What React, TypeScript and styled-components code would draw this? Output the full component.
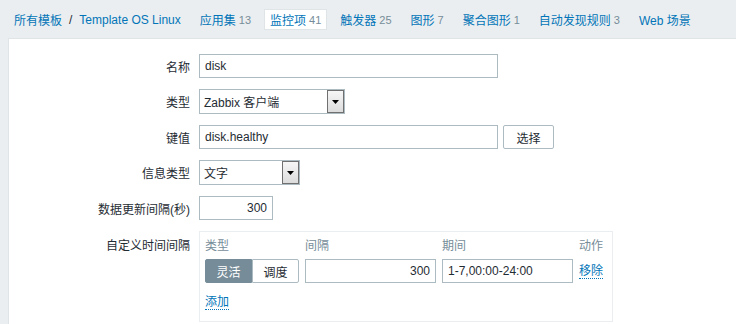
import styled, { createGlobalStyle } from "styled-components";

const GlobalStyle = createGlobalStyle`
    body {
        margin: 0;
        background-color: #ebeef0;
        font-family: "Liberation Sans", Arial, "Noto Sans CJK SC", sans-serif;
        font-size: 12px;
        color: #1f2c33;
    }
`;

const NavBar = styled.nav`
    display: flex;
    align-items: center;
    gap: 7px;
    padding: 9px 8px 8px;
    height: 21px;
`;

const Crumbs = styled.div`
    display: flex;
    align-items: center;
`;

const NavLink = styled.a<{ $active?: boolean }>`
    display: flex;
    align-items: center;
    height: 21px;
    padding: 0 5px;
    box-sizing: border-box;
    color: #0275b8;
    text-decoration: none;
    white-space: nowrap;
    background-color: ${(p) => (p.$active ? "#ffffff" : "transparent")};
    border: 1px solid ${(p) => (p.$active ? "#dfe4e7" : "transparent")};
`;

const Sep = styled.span`
    color: #1f2c33;
    padding: 0 1px;
`;

const Count = styled.span`
    color: #768d99;
    font-size: 11px;
    margin-left: 3px;
`;

const Panel = styled.main`
    margin-left: 8px;
    background-color: #ffffff;
    border-left: 1px solid #dfe4e7;
    border-top: 1px solid #dfe4e7;
    padding: 15px 0 0;
    min-height: 290px;
    box-sizing: border-box;
`;

const Form = styled.div`
    display: grid;
    grid-template-columns: 181px 1fr;
    column-gap: 9px;
    row-gap: 11px;
    align-items: center;
`;

const Label = styled.label<{ $top?: boolean }>`
    text-align: right;
    white-space: nowrap;
    align-self: ${(p) => (p.$top ? "start" : "center")};
    padding-top: ${(p) => (p.$top ? "5px" : "0")};
`;

const Field = styled.div`
    display: flex;
    align-items: center;
    gap: 5px;
`;

const TextBox = styled.div<{ $w: number; $right?: boolean }>`
    width: ${(p) => p.$w}px;
    height: 24px;
    box-sizing: border-box;
    border: 1px solid #acbbc2;
    padding: 0 5px;
    display: flex;
    align-items: center;
    justify-content: ${(p) => (p.$right ? "flex-end" : "flex-start")};
    background: #ffffff;
`;

const Select = styled.div<{ $w: number }>`
    width: ${(p) => p.$w}px;
    height: 25px;
    box-sizing: border-box;
    border: 1px solid #acbbc2;
    display: flex;
    align-items: center;
    justify-content: space-between;
    padding-left: 4px;
`;

const SelectArrow = styled.div`
    width: 17px;
    height: 23px;
    box-sizing: border-box;
    border: 1px solid #707070;
    background: linear-gradient(#f6f6f6, #dcdcdc);
    display: flex;
    align-items: center;
    justify-content: center;
`;

const Button = styled.button`
    height: 24px;
    width: 51px;
    border: 1px solid #acbbc2;
    border-radius: 2px;
    background: #ffffff;
    font: inherit;
    color: #1f2c33;
    padding: 0;
`;

const IntervalBox = styled.div`
    width: 414px;
    height: 91px;
    box-sizing: border-box;
    border: 1px solid #ebeef0;
    padding: 5px;
`;

const IntervalGrid = styled.div`
    display: grid;
    grid-template-columns: 94px 131px 131px auto;
    column-gap: 6px;
    row-gap: 4px;
    align-items: center;
`;

const HeadCell = styled.div`
    color: #768d99;
    height: 18px;
    line-height: 18px;
`;

const Toggle = styled.div`
    display: flex;
    height: 24px;
`;

const ToggleBtn = styled.div<{ $on?: boolean }>`
    flex: 1;
    display: flex;
    align-items: center;
    justify-content: center;
    box-sizing: border-box;
    border: 1px solid ${(p) => (p.$on ? "#768d99" : "#acbbc2")};
    background: ${(p) => (p.$on ? "#768d99" : "#ffffff")};
    color: ${(p) => (p.$on ? "#ffffff" : "#1f2c33")};
    border-radius: ${(p) => (p.$on ? "2px 0 0 2px" : "0 2px 2px 0")};
`;

const DotLink = styled.a`
    color: #0275b8;
    text-decoration: none;
    border-bottom: 1px dotted #0275b8;
    justify-self: start;
    line-height: 14px;
`;

const AddRow = styled.div`
    margin-top: 12px;
`;

export function App() {
    const tabs = [
        { t: "应用集", n: 13 },
        { t: "监控项", n: 41, active: true },
        { t: "触发器", n: 25 },
        { t: "图形", n: 7 },
        { t: "聚合图形", n: 1 },
        { t: "自动发现规则", n: 3 },
        { t: "Web 场景" },
    ];

    return (
        <>
            <GlobalStyle />
            <NavBar>
                <Crumbs>
                    <NavLink>所有模板</NavLink>
                    <Sep>/</Sep>
                    <NavLink>Template OS Linux</NavLink>
                </Crumbs>
                {tabs.map((tab) => (
                    <NavLink key={tab.t} $active={tab.active}>
                        {tab.t}
                        {tab.n !== undefined && <Count>{tab.n}</Count>}
                    </NavLink>
                ))}
            </NavBar>

            <Panel>
                <Form>
                    <Label>名称</Label>
                    <Field>
                        <TextBox $w={299}>disk</TextBox>
                    </Field>

                    <Label>类型</Label>
                    <Field>
                        <Select $w={146}>
                            Zabbix 客户端
                            <SelectArrow>
                                <svg width="7" height="4" viewBox="0 0 7 4">
                                    <path d="M0 0h7L3.5 4z" fill="#000" />
                                </svg>
                            </SelectArrow>
                        </Select>
                    </Field>

                    <Label>键值</Label>
                    <Field>
                        <TextBox $w={299}>disk.healthy</TextBox>
                        <Button>选择</Button>
                    </Field>

                    <Label>信息类型</Label>
                    <Field>
                        <Select $w={101}>
                            文字
                            <SelectArrow>
                                <svg width="7" height="4" viewBox="0 0 7 4">
                                    <path d="M0 0h7L3.5 4z" fill="#000" />
                                </svg>
                            </SelectArrow>
                        </Select>
                    </Field>

                    <Label>数据更新间隔(秒)</Label>
                    <Field>
                        <TextBox $w={74} $right>300</TextBox>
                    </Field>

                    <Label $top>自定义时间间隔</Label>
                    <IntervalBox>
                        <IntervalGrid>
                            <HeadCell>类型</HeadCell>
                            <HeadCell>间隔</HeadCell>
                            <HeadCell>期间</HeadCell>
                            <HeadCell>动作</HeadCell>

                            <Toggle>
                                <ToggleBtn $on>灵活</ToggleBtn>
                                <ToggleBtn>调度</ToggleBtn>
                            </Toggle>
                            <TextBox $w={131} $right>300</TextBox>
                            <TextBox $w={131}>1-7,00:00-24:00</TextBox>
                            <DotLink>移除</DotLink>
                        </IntervalGrid>
                        <AddRow>
                            <DotLink>添加</DotLink>
                        </AddRow>
                    </IntervalBox>
                </Form>
            </Panel>
        </>
    );
}

export default App;
